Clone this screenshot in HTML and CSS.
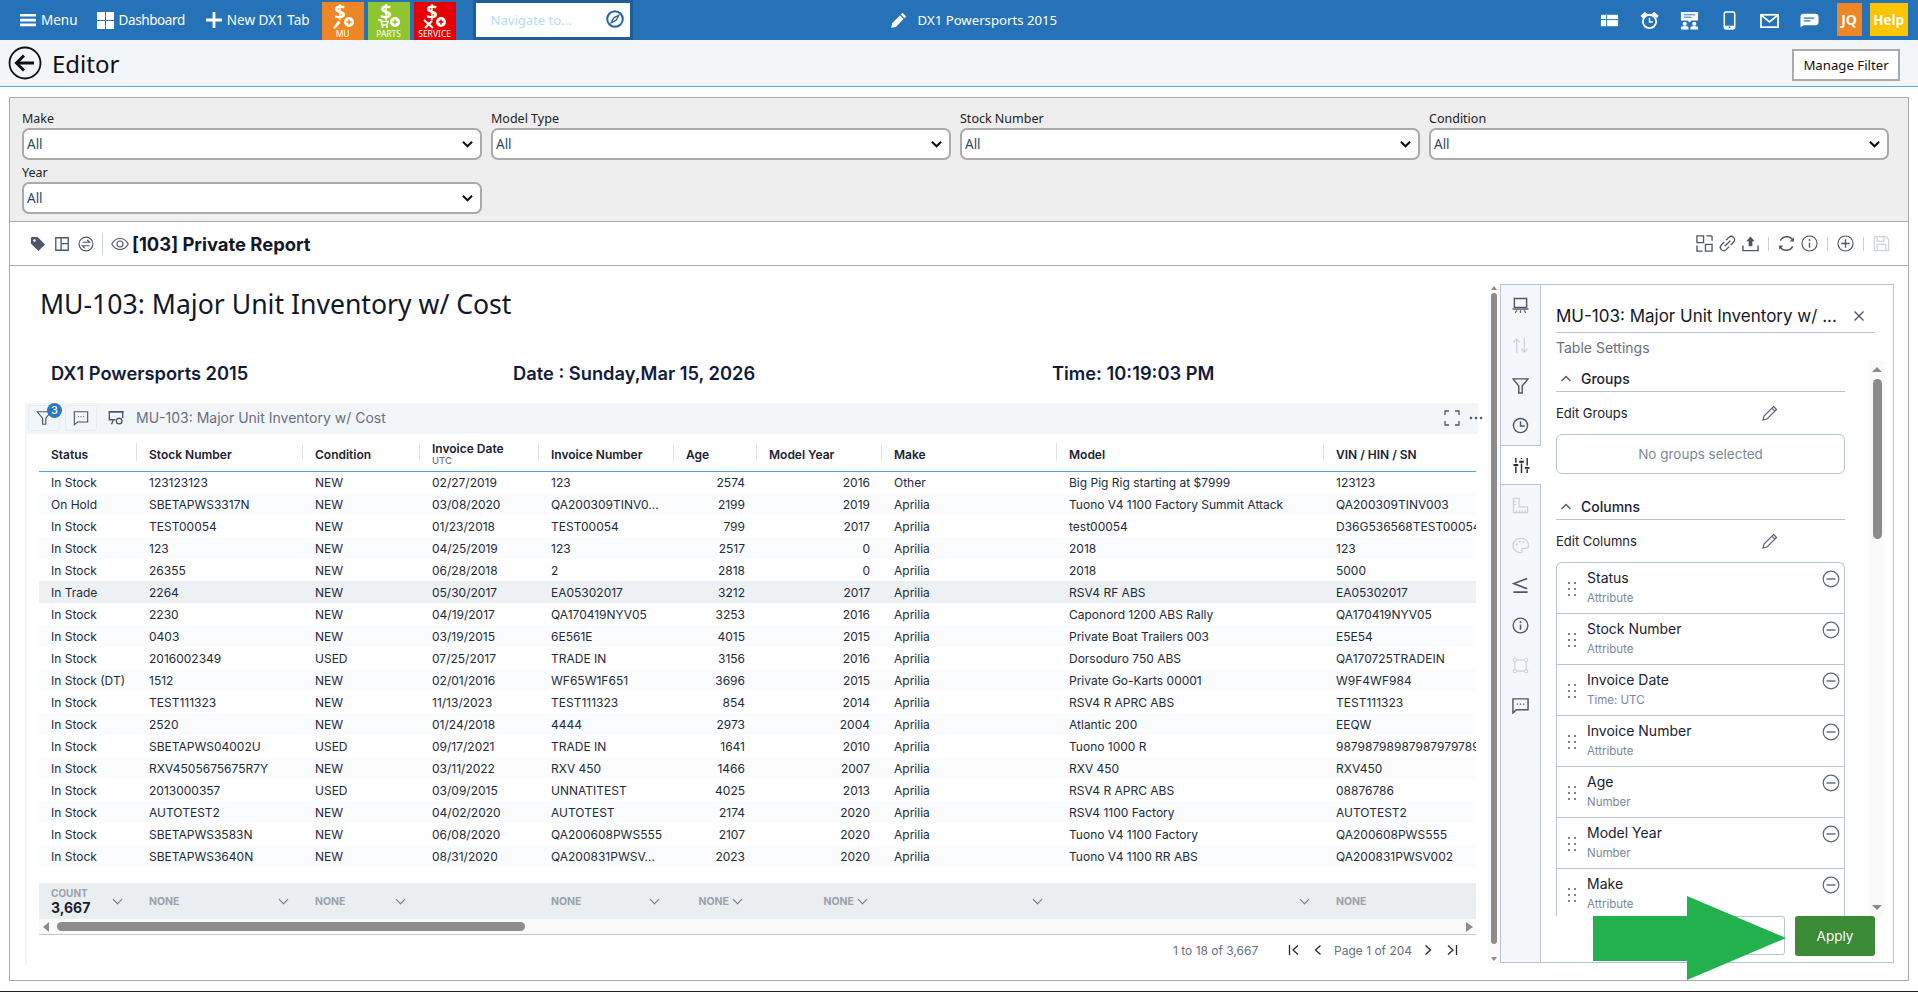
FILE: index.html
```html
<!DOCTYPE html>
<html lang="en">
<head>
<meta charset="utf-8">
<title>Editor</title>
<link rel="stylesheet" href="styles.css">
</head>
<body>
<header class="topbar">
  <a class="nav-item nav-menu"><svg class="nav-ic" viewBox="0 0 16 16"><path d="M0 2h16v2.600H0zM0 6.800h16v2.600H0zM0 11.600h16v2.600H0z" fill="#fff"/></svg>Menu</a>
  <a class="nav-item nav-dash"><svg class="nav-ic nav-ic-l" viewBox="0 0 17 17"><path d="M0 0h8v8H0zM9 0h8v8H9zM0 9h8v8H0zM9 9h8v8H9z" fill="#fff"/></svg>Dashboard</a>
  <a class="nav-item nav-new"><svg class="nav-ic" viewBox="0 0 16 16"><path d="M6.600 0h2.800v6.600H16v2.800H9.400V16H6.600V9.400H0V6.600h6.600z" fill="#fff"/></svg>New DX1 Tab</a>
  <div class="quick quick-mu"><svg class="quick-ic" viewBox="0 0 42 26"><text x="18" y="17" class="dollar">$</text><circle cx="27" cy="20" r="5" fill="#fff"/><path d="M24.500 20h5M27 17.500v5" stroke="#ee8626" stroke-width="1.500"/><path d="M11 26l5-7 2.500 1.500-5 6z" fill="#fff"/></svg><span>MU</span></div>
  <div class="quick quick-parts"><svg class="quick-ic" viewBox="0 0 42 26"><text x="18" y="17" class="dollar">$</text><circle cx="27" cy="20" r="5" fill="#fff"/><path d="M24.500 20h5M27 17.500v5" stroke="#8fc52e" stroke-width="1.500"/><path d="M10 18h3l1 5h5l1-3.500h-6" stroke="#fff" stroke-width="1.600" fill="none"/><circle cx="14.500" cy="25" r="1.100" fill="#fff"/><circle cx="19" cy="25" r="1.100" fill="#fff"/></svg><span>PARTS</span></div>
  <div class="quick quick-service"><svg class="quick-ic" viewBox="0 0 42 26"><text x="18" y="17" class="dollar">$</text><circle cx="27" cy="20" r="5" fill="#fff"/><path d="M24.500 20h5M27 17.500v5" stroke="#e60000" stroke-width="1.500"/><path d="M10 18l9 8M11 26l7-7" stroke="#fff" stroke-width="2.200"/></svg><span>SERVICE</span></div>
  <div class="navigate"><span>Navigate to...</span><svg class="compass" viewBox="0 0 18 18"><circle cx="9" cy="9" r="7.800" fill="none" stroke="#24649c" stroke-width="2"/><path d="M12.800 5.200 10.200 10.200 5.200 12.800 7.800 7.800z" fill="none" stroke="#24649c" stroke-width="1.300"/></svg></div>
  <div class="dealer"><svg class="dealer-ic" viewBox="0 0 16 16"><path d="M11.500.8l3.700 3.700-1.700 1.700-3.700-3.700zM8.900 3.400l3.700 3.700-7.800 7.800-4.600.900.900-4.600z" fill="#fff"/></svg>DX1 Powersports 2015</div>
  <div class="top-icons">
    <svg class="top-ic" viewBox="0 0 20 20"><path d="M1 4h18v12H1z" fill="#fff"/><path d="M1 9h18M7 4v12" stroke="#2672b8" stroke-width="1"/></svg>
    <svg class="top-ic" viewBox="0 0 20 20"><circle cx="10" cy="11" r="7" fill="none" stroke="#fff" stroke-width="2"/><path d="M10 7v4.500h3.500" fill="none" stroke="#fff" stroke-width="1.500"/><path d="M1 5l4-3.500 2 1.500-4.500 4zM19 5l-4-3.500-2 1.500 4.500 4zM5 18l1.500-2M15 18l-1.500-2" fill="#fff" stroke="#fff"/></svg>
    <svg class="top-ic" viewBox="0 0 20 20"><path d="M1 1h18v9H12l-2 2-2-2H1z" fill="#fff"/><path d="M4 4h12M4 6.500h8" stroke="#2672b8"/><circle cx="5" cy="13.500" r="2.200" fill="#fff"/><circle cx="15" cy="13.500" r="2.200" fill="#fff"/><path d="M1 19.500v-2c0-1 1-1.800 4-1.800s4 .8 4 1.800v2zM11 19.500v-2c0-1 1-1.800 4-1.800s4 .8 4 1.800v2z" fill="#fff"/></svg>
    <svg class="top-ic" viewBox="0 0 20 20"><rect x="4.500" y="1" width="11" height="18" rx="1.800" fill="none" stroke="#fff" stroke-width="1.600"/><path d="M5 15.500h10v3H5z" fill="#fff"/><circle cx="10" cy="17" r=".9" fill="#2672b8"/></svg>
    <svg class="top-ic" viewBox="0 0 20 20"><rect x="1" y="4" width="18" height="13" fill="none" stroke="#fff" stroke-width="1.800"/><path d="M1.500 4.500 10 11.500l8.500-7" fill="none" stroke="#fff" stroke-width="1.800"/></svg>
    <svg class="top-ic" viewBox="0 0 20 20"><path d="M4 3h12a3.500 3.500 0 0 1 3.500 3.500v5A3.500 3.500 0 0 1 16 15H4L.5 17V6.500A3.500 3.500 0 0 1 4 3z" fill="#fff"/><path d="M4 7.500h11M4 10.500h7" stroke="#2672b8" stroke-width="1.300"/></svg>
  </div>
  <div class="badge-jq">JQ</div>
  <div class="badge-help">Help</div>
</header>

<div class="subheader">
  <svg class="back" viewBox="0 0 34 34"><circle cx="17" cy="17" r="15.500" fill="none" stroke="#111" stroke-width="1.800"/><path d="M8 17h18" stroke="#111" stroke-width="3"/><path d="M16 9.500 8.500 17l7.500 7.500" fill="none" stroke="#111" stroke-width="3"/></svg>
  <h1 class="page-title">Editor</h1>
  <button class="manage">Manage Filter</button>
</div>

<main class="shell">
  <section class="filters">
    <div class="field"><label>Make</label><select><option>All</option></select></div>
    <div class="field"><label>Model Type</label><select><option>All</option></select></div>
    <div class="field"><label>Stock Number</label><select><option>All</option></select></div>
    <div class="field"><label>Condition</label><select><option>All</option></select></div>
    <div class="field"><label>Year</label><select><option>All</option></select></div>
  </section>

  <section class="toolbar">
    <svg class="tb-ic" viewBox="0 0 18 18"><path d="M1 2.500A1.500 1.500 0 0 1 2.500 1h6L17 9.500 9.500 17 1 8.500z" fill="#4d5768"/><circle cx="5" cy="5" r="1.400" fill="#fff"/></svg>
    <svg class="tb-ic" viewBox="0 0 18 18"><path d="M2 2h14v14H2zM8 2v14M8 8.500h8" fill="none" stroke="#4d5768" stroke-width="1.500"/></svg>
    <svg class="tb-ic" viewBox="0 0 18 18"><circle cx="9" cy="9" r="7.800" fill="none" stroke="#4d5768" stroke-width="1.300"/><path d="M5 7h8l-2.500-2.500M13 11H5l2.500 2.500" fill="none" stroke="#4d5768" stroke-width="1.300"/></svg>
    <span class="tb-sep"></span>
    <svg class="tb-eye" viewBox="0 0 18 18"><path d="M.8 9C3 5 5.800 3.500 9 3.500S15 5 17.200 9C15 13 12.200 14.500 9 14.500S3 13 .8 9z" fill="none" stroke="#4d5768" stroke-width="1.200"/><circle cx="9" cy="9" r="3" fill="none" stroke="#4d5768" stroke-width="1.200"/></svg>
    <strong class="report-name">[103] Private Report</strong>
    <div class="tb-right">
      <svg class="tb-ic2" viewBox="0 0 18 18"><path d="M1 1h7v7H1zM10 10h7v7h-7zM11 1h6M17 1v5M1 11v6h6" fill="none" stroke="#4d5768" stroke-width="1.400"/></svg>
      <svg class="tb-ic2" viewBox="0 0 18 18"><path d="M7.500 5.500 10.500 2.500a3.500 3.500 0 0 1 5 5l-3 3M10.500 12.500l-3 3a3.500 3.500 0 0 1-5-5l3-3M6 12l6-6" fill="none" stroke="#4d5768" stroke-width="1.400"/></svg>
      <svg class="tb-ic2" viewBox="0 0 18 18"><path d="M1 11v5.500h16V11M1 16.500" fill="none" stroke="#4d5768" stroke-width="1.500"/><path d="M9 1.500 13.500 6.500H11V12H7V6.500H4.500z" fill="#4d5768"/></svg>
      <span class="tb-sep2"></span>
      <svg class="tb-ic2" viewBox="0 0 18 18"><path d="M2.500 6A7.500 7.500 0 0 1 16 6M15.500 12A7.500 7.500 0 0 1 2 12" fill="none" stroke="#4d5768" stroke-width="1.500"/><path d="M16.800 2.500v4.300h-4.300zM1.200 15.500v-4.300h4.300z" fill="#4d5768"/></svg>
      <svg class="tb-ic2" viewBox="0 0 18 18"><circle cx="9" cy="9" r="8" fill="none" stroke="#4d5768" stroke-width="1.200"/><path d="M9 8v5.500" stroke="#4d5768" stroke-width="1.500"/><circle cx="9" cy="5.300" r="1" fill="#4d5768"/></svg>
      <span class="tb-sep2"></span>
      <svg class="tb-ic2" viewBox="0 0 18 18"><circle cx="9" cy="9" r="8" fill="none" stroke="#4d5768" stroke-width="1.200"/><path d="M9 4.500v9M4.500 9h9" stroke="#4d5768" stroke-width="1.500"/></svg>
      <span class="tb-sep2"></span>
      <svg class="tb-ic2" viewBox="0 0 18 18"><path d="M1.500 1.500h12l3 3v12h-15z" fill="none" stroke="#cfd6df" stroke-width="1.500"/><path d="M4.500 2v4.500h7V2M4.500 16v-6h9v6" fill="none" stroke="#cfd6df" stroke-width="1.500"/></svg>
    </div>
  </section>

  <section class="content">
    <div class="report">
      <h2 class="report-title">MU-103: Major Unit Inventory w/ Cost</h2>
      <div class="report-info"><span>DX1 Powersports 2015</span><span>Date : Sunday,Mar 15, 2026</span><span>Time: 10:19:03 PM</span></div>
      <div class="widget">
        <div class="widget-head">
          <span class="wbtn wbtn-filter"><svg class="w-ic" viewBox="0 0 18 18"><path d="M1.500 2h15L11 9.500V16H7.500V9.500z" fill="none" stroke="#4d5768" stroke-width="1.300"/></svg><span class="count">3</span></span>
          <span class="wbtn"><svg class="w-ic" viewBox="0 0 18 18"><path d="M1.500 2h15v11.500H5L1.500 16.500z" fill="none" stroke="#4d5768" stroke-width="1.300"/><path d="M5.500 7.500h1M8.500 7.500h1M11.500 7.500h1" stroke="#4d5768" stroke-width="1.500"/></svg></span>
          <svg class="w-pres" viewBox="0 0 18 18"><path d="M1.500 2h15v7M1.500 2v9h4M4 16l2-5h2" fill="none" stroke="#4d5768" stroke-width="1.500"/><circle cx="12.500" cy="12.500" r="3.200" fill="none" stroke="#4d5768" stroke-width="1.500"/><path d="M.5 2h17" stroke="#4d5768" stroke-width="1.500"/></svg>
          <span class="widget-title">MU-103: Major Unit Inventory w/ Cost</span>
          <svg class="w-full" viewBox="0 0 16 16"><path d="M1 5V1h4M11 1h4v4M15 11v4h-4M5 15H1v-4" fill="none" stroke="#4d5768" stroke-width="1.300"/></svg>
          <svg class="w-dots" viewBox="0 0 16 16"><circle cx="3" cy="8" r="1.300" fill="#4d5768"/><circle cx="8" cy="8" r="1.300" fill="#4d5768"/><circle cx="13" cy="8" r="1.300" fill="#4d5768"/></svg>
        </div>
        <div class="widget-body">
          <table class="grid">
            <colgroup><col class="c1"><col class="c2"><col class="c3"><col class="c4"><col class="c5"><col class="c6"><col class="c7"><col class="c8"><col class="c9"><col class="c10"></colgroup>
            <thead><tr><th>Status</th><th>Stock Number</th><th>Condition</th><th class="two"><span class="h2l">Invoice Date</span><small>UTC</small></th><th>Invoice Number</th><th>Age</th><th>Model Year</th><th>Make</th><th>Model</th><th>VIN / HIN / SN</th></tr></thead>
            <tbody>
              <tr><td>In Stock</td><td>123123123</td><td>NEW</td><td>02/27/2019</td><td>123</td><td class="n">2574</td><td class="n">2016</td><td>Other</td><td>Big Pig Rig starting at $7999</td><td>123123</td></tr>
              <tr><td>On Hold</td><td>SBETAPWS3317N</td><td>NEW</td><td>03/08/2020</td><td>QA200309TINV0...</td><td class="n">2199</td><td class="n">2019</td><td>Aprilia</td><td>Tuono V4 1100 Factory Summit Attack</td><td>QA200309TINV003</td></tr>
              <tr><td>In Stock</td><td>TEST00054</td><td>NEW</td><td>01/23/2018</td><td>TEST00054</td><td class="n">799</td><td class="n">2017</td><td>Aprilia</td><td>test00054</td><td>D36G536568TEST00054</td></tr>
              <tr><td>In Stock</td><td>123</td><td>NEW</td><td>04/25/2019</td><td>123</td><td class="n">2517</td><td class="n">0</td><td>Aprilia</td><td>2018</td><td>123</td></tr>
              <tr><td>In Stock</td><td>26355</td><td>NEW</td><td>06/28/2018</td><td>2</td><td class="n">2818</td><td class="n">0</td><td>Aprilia</td><td>2018</td><td>5000</td></tr>
              <tr class="hl"><td>In Trade</td><td>2264</td><td>NEW</td><td>05/30/2017</td><td>EA05302017</td><td class="n">3212</td><td class="n">2017</td><td>Aprilia</td><td>RSV4 RF ABS</td><td>EA05302017</td></tr>
              <tr><td>In Stock</td><td>2230</td><td>NEW</td><td>04/19/2017</td><td>QA170419NYV05</td><td class="n">3253</td><td class="n">2016</td><td>Aprilia</td><td>Caponord 1200 ABS Rally</td><td>QA170419NYV05</td></tr>
              <tr><td>In Stock</td><td>0403</td><td>NEW</td><td>03/19/2015</td><td>6E561E</td><td class="n">4015</td><td class="n">2015</td><td>Aprilia</td><td>Private Boat Trailers 003</td><td>E5E54</td></tr>
              <tr><td>In Stock</td><td>2016002349</td><td>USED</td><td>07/25/2017</td><td>TRADE IN</td><td class="n">3156</td><td class="n">2016</td><td>Aprilia</td><td>Dorsoduro 750 ABS</td><td>QA170725TRADEIN</td></tr>
              <tr><td>In Stock (DT)</td><td>1512</td><td>NEW</td><td>02/01/2016</td><td>WF65W1F651</td><td class="n">3696</td><td class="n">2015</td><td>Aprilia</td><td>Private Go-Karts 00001</td><td>W9F4WF984</td></tr>
              <tr><td>In Stock</td><td>TEST111323</td><td>NEW</td><td>11/13/2023</td><td>TEST111323</td><td class="n">854</td><td class="n">2014</td><td>Aprilia</td><td>RSV4 R APRC ABS</td><td>TEST111323</td></tr>
              <tr><td>In Stock</td><td>2520</td><td>NEW</td><td>01/24/2018</td><td>4444</td><td class="n">2973</td><td class="n">2004</td><td>Aprilia</td><td>Atlantic 200</td><td>EEQW</td></tr>
              <tr><td>In Stock</td><td>SBETAPWS04002U</td><td>USED</td><td>09/17/2021</td><td>TRADE IN</td><td class="n">1641</td><td class="n">2010</td><td>Aprilia</td><td>Tuono 1000 R</td><td>98798798987987979789890</td></tr>
              <tr><td>In Stock</td><td>RXV4505675675R7Y</td><td>NEW</td><td>03/11/2022</td><td>RXV 450</td><td class="n">1466</td><td class="n">2007</td><td>Aprilia</td><td>RXV 450</td><td>RXV450</td></tr>
              <tr><td>In Stock</td><td>2013000357</td><td>USED</td><td>03/09/2015</td><td>UNNATITEST</td><td class="n">4025</td><td class="n">2013</td><td>Aprilia</td><td>RSV4 R APRC ABS</td><td>08876786</td></tr>
              <tr><td>In Stock</td><td>AUTOTEST2</td><td>NEW</td><td>04/02/2020</td><td>AUTOTEST</td><td class="n">2174</td><td class="n">2020</td><td>Aprilia</td><td>RSV4 1100 Factory</td><td>AUTOTEST2</td></tr>
              <tr><td>In Stock</td><td>SBETAPWS3583N</td><td>NEW</td><td>06/08/2020</td><td>QA200608PWS555</td><td class="n">2107</td><td class="n">2020</td><td>Aprilia</td><td>Tuono V4 1100 Factory</td><td>QA200608PWS555</td></tr>
              <tr><td>In Stock</td><td>SBETAPWS3640N</td><td>NEW</td><td>08/31/2020</td><td>QA200831PWSV...</td><td class="n">2023</td><td class="n">2020</td><td>Aprilia</td><td>Tuono V4 1100 RR ABS</td><td>QA200831PWSV002</td></tr>
            </tbody>
          </table>
          <div class="summary">
            <div><span class="s-count"><small>COUNT</small><b>3,667</b></span><i class="chev"></i></div>
            <div><small>NONE</small><i class="chev"></i></div>
            <div><small>NONE</small><i class="chev"></i></div>
            <div class="s-end"></div>
            <div><small>NONE</small><i class="chev"></i></div>
            <div class="s-end"><small>NONE</small><i class="chev"></i></div>
            <div class="s-end"><small>NONE</small><i class="chev"></i></div>
            <div class="s-end"><i class="chev"></i></div>
            <div class="s-end"><i class="chev"></i></div>
            <div><small>NONE</small></div>
          </div>
          <div class="hscroll"><i class="arrow-l"></i><span class="hthumb"></span><i class="arrow-r"></i></div>
          <div class="pager">
            <span class="pager-count">1 to 18 of 3,667</span>
            <svg class="pg pg-first" viewBox="0 0 12 12"><path d="M1.500 1v10M10 1.500 5 6l5 4.500" fill="none" stroke="#222b3a" stroke-width="1.300"/></svg>
            <svg class="pg pg-prev" viewBox="0 0 12 12"><path d="M8.500 1.500 3.500 6l5 4.500" fill="none" stroke="#222b3a" stroke-width="1.300"/></svg>
            <span class="pager-page">Page 1 of 204</span>
            <svg class="pg pg-next" viewBox="0 0 12 12"><path d="M3.500 1.500 8.500 6l-5 4.500" fill="none" stroke="#222b3a" stroke-width="1.300"/></svg>
            <svg class="pg pg-last" viewBox="0 0 12 12"><path d="M10.500 1v10M2 1.500 7 6l-5 4.500" fill="none" stroke="#222b3a" stroke-width="1.300"/></svg>
          </div>
        </div>
      </div>
    </div>

    <div class="vscroll"><i class="arrow-u"></i><span class="vthumb"></span><i class="arrow-d"></i></div>

    <aside class="panel">
      <nav class="tabs">
        <span class="tab"><svg class="tab-ic" viewBox="0 0 18 18"><path d="M2.500 1.500h13v9.500h-13z" fill="none" stroke="#4d5768" stroke-width="1.500"/><path d="M.5 12h17v1.500H.5z" fill="#4d5768"/><path d="M5 14l-1.500 3M9 14v3M13 14l1.500 3" stroke="#4d5768" stroke-width="1.200"/></svg></span>
        <span class="tab"><svg class="tab-ic" viewBox="0 0 18 18"><path d="M5 17V2M1.500 5.500 5 2l3.500 3.500M13 1v15M9.500 12.500 13 16l3.500-3.500" fill="none" stroke="#ccd3dc" stroke-width="1.400"/></svg></span>
        <span class="tab"><svg class="tab-ic" viewBox="0 0 18 18"><path d="M1 2h16l-6.200 7.500V17H7.200V9.500z" fill="none" stroke="#4d5768" stroke-width="1.500"/></svg></span>
        <span class="tab"><svg class="tab-ic" viewBox="0 0 18 18"><circle cx="9" cy="9" r="7.500" fill="none" stroke="#4d5768" stroke-width="1.500"/><path d="M9 4.500V9.500h4.500" fill="none" stroke="#4d5768" stroke-width="1.500"/></svg></span>
        <span class="tab tab-active"><svg class="tab-ic" viewBox="0 0 18 18"><path d="M3 1v5M3 10v7M9 1v1M9 7v10M15 1v8M15 13v4" stroke="#222b3a" stroke-width="1.500"/><path d="M.5 7.500h5v2h-5zM6.500 4h5v2h-5zM12.500 10.500h5v2h-5z" fill="#222b3a"/></svg></span>
        <span class="tab"><svg class="tab-ic" viewBox="0 0 18 18"><path d="M1.500 1.500h6v9h9v6h-15zM1.500 5h2.500M1.500 8h2.500M5 16.500V14M8 16.500V14M11 16.500V14M14 16.500V14" fill="none" stroke="#ccd3dc" stroke-width="1.400"/></svg></span>
        <span class="tab"><svg class="tab-ic" viewBox="0 0 18 18"><path d="M9 1.500C4.500 1.500 1 4.800 1 9s3.500 7.500 8 7.500c1.500 0 2-1 1.500-2-.6-1.500.2-2.500 2-2.500h2.500c1.500 0 2.500-1.200 2.500-3 0-4.500-3.500-7.500-8-7.500z" fill="none" stroke="#ccd3dc" stroke-width="1.400"/><circle cx="5" cy="8" r="1.200" fill="#ccd3dc"/><circle cx="8" cy="5" r="1.200" fill="#ccd3dc"/><circle cx="12" cy="5.500" r="1.200" fill="#ccd3dc"/></svg></span>
        <span class="tab"><svg class="tab-ic" viewBox="0 0 18 18"><path d="M16 1.500 2 7l14 5.500M1.500 16h15" fill="none" stroke="#4d5768" stroke-width="1.700"/></svg></span>
        <span class="tab"><svg class="tab-ic" viewBox="0 0 18 18"><circle cx="9" cy="9" r="7.800" fill="none" stroke="#4d5768" stroke-width="1.400"/><path d="M9 8v5.500" stroke="#4d5768" stroke-width="1.600"/><circle cx="9" cy="5.300" r="1.100" fill="#4d5768"/></svg></span>
        <span class="tab"><svg class="tab-ic" viewBox="0 0 18 18"><path d="M3 3h12v12H3z" fill="none" stroke="#ccd3dc" stroke-width="1.300"/><g fill="#fff" stroke="#ccd3dc" stroke-width="1.200"><circle cx="3" cy="3" r="1.700"/><circle cx="15" cy="3" r="1.700"/><circle cx="3" cy="15" r="1.700"/><circle cx="15" cy="15" r="1.700"/></g></svg></span>
        <span class="tab"><svg class="tab-ic" viewBox="0 0 18 18"><path d="M1 2h16v11.500H4.500L1 17z" fill="none" stroke="#4d5768" stroke-width="1.500"/><path d="M5 7.500h1.500M8.300 7.500h1.500M11.600 7.500h1.500" stroke="#4d5768" stroke-width="1.500"/></svg></span>
      </nav>
      <div class="settings">
        <div class="settings-title"><span>MU-103: Major Unit Inventory w/ ...</span><svg class="close" viewBox="0 0 12 12"><path d="M1.500 1.500l9 9M10.500 1.500l-9 9" stroke="#4d5768" stroke-width="1.400"/></svg></div>
        <div class="settings-sub">Table Settings</div>
        <div class="scroller">
          <div class="scroll-body">
            <div class="sec-head"><svg class="sec-chev" viewBox="0 0 12 12"><path d="M1.500 8 6 3.500 10.500 8" fill="none" stroke="#4d5768" stroke-width="1.300"/></svg>Groups</div>
            <div class="edit-row"><span>Edit Groups</span><svg class="pencil" viewBox="0 0 16 16"><path d="M11.500 1.500l3 3L5 14l-4 1 1-4zM9.800 3.200l3 3" fill="none" stroke="#5c6676" stroke-width="1.200"/></svg></div>
            <div class="empty-box">No groups selected</div>
            <div class="sec-head sec-cols"><svg class="sec-chev" viewBox="0 0 12 12"><path d="M1.500 8 6 3.500 10.500 8" fill="none" stroke="#4d5768" stroke-width="1.300"/></svg>Columns</div>
            <div class="edit-row"><span>Edit Columns</span><svg class="pencil" viewBox="0 0 16 16"><path d="M11.500 1.500l3 3L5 14l-4 1 1-4zM9.800 3.200l3 3" fill="none" stroke="#5c6676" stroke-width="1.200"/></svg></div>
            <ul class="col-list">
              <li class="col-item"><svg class="drag" viewBox="0 0 10 16"><g fill="#5c6676"><circle cx="2" cy="2" r="1.100"/><circle cx="8" cy="2" r="1.100"/><circle cx="2" cy="8" r="1.100"/><circle cx="8" cy="8" r="1.100"/><circle cx="2" cy="14" r="1.100"/><circle cx="8" cy="14" r="1.100"/></g></svg><div class="col-text"><b>Status</b><small>Attribute</small></div><svg class="minus" viewBox="0 0 18 18"><circle cx="9" cy="9" r="7.800" fill="none" stroke="#5c6676" stroke-width="1.200"/><path d="M4.500 9h9" stroke="#5c6676" stroke-width="1.400"/></svg></li>
              <li class="col-item"><svg class="drag" viewBox="0 0 10 16"><g fill="#5c6676"><circle cx="2" cy="2" r="1.100"/><circle cx="8" cy="2" r="1.100"/><circle cx="2" cy="8" r="1.100"/><circle cx="8" cy="8" r="1.100"/><circle cx="2" cy="14" r="1.100"/><circle cx="8" cy="14" r="1.100"/></g></svg><div class="col-text"><b>Stock Number</b><small>Attribute</small></div><svg class="minus" viewBox="0 0 18 18"><circle cx="9" cy="9" r="7.800" fill="none" stroke="#5c6676" stroke-width="1.200"/><path d="M4.500 9h9" stroke="#5c6676" stroke-width="1.400"/></svg></li>
              <li class="col-item"><svg class="drag" viewBox="0 0 10 16"><g fill="#5c6676"><circle cx="2" cy="2" r="1.100"/><circle cx="8" cy="2" r="1.100"/><circle cx="2" cy="8" r="1.100"/><circle cx="8" cy="8" r="1.100"/><circle cx="2" cy="14" r="1.100"/><circle cx="8" cy="14" r="1.100"/></g></svg><div class="col-text"><b>Invoice Date</b><small>Time: UTC</small></div><svg class="minus" viewBox="0 0 18 18"><circle cx="9" cy="9" r="7.800" fill="none" stroke="#5c6676" stroke-width="1.200"/><path d="M4.500 9h9" stroke="#5c6676" stroke-width="1.400"/></svg></li>
              <li class="col-item"><svg class="drag" viewBox="0 0 10 16"><g fill="#5c6676"><circle cx="2" cy="2" r="1.100"/><circle cx="8" cy="2" r="1.100"/><circle cx="2" cy="8" r="1.100"/><circle cx="8" cy="8" r="1.100"/><circle cx="2" cy="14" r="1.100"/><circle cx="8" cy="14" r="1.100"/></g></svg><div class="col-text"><b>Invoice Number</b><small>Attribute</small></div><svg class="minus" viewBox="0 0 18 18"><circle cx="9" cy="9" r="7.800" fill="none" stroke="#5c6676" stroke-width="1.200"/><path d="M4.500 9h9" stroke="#5c6676" stroke-width="1.400"/></svg></li>
              <li class="col-item"><svg class="drag" viewBox="0 0 10 16"><g fill="#5c6676"><circle cx="2" cy="2" r="1.100"/><circle cx="8" cy="2" r="1.100"/><circle cx="2" cy="8" r="1.100"/><circle cx="8" cy="8" r="1.100"/><circle cx="2" cy="14" r="1.100"/><circle cx="8" cy="14" r="1.100"/></g></svg><div class="col-text"><b>Age</b><small>Number</small></div><svg class="minus" viewBox="0 0 18 18"><circle cx="9" cy="9" r="7.800" fill="none" stroke="#5c6676" stroke-width="1.200"/><path d="M4.500 9h9" stroke="#5c6676" stroke-width="1.400"/></svg></li>
              <li class="col-item"><svg class="drag" viewBox="0 0 10 16"><g fill="#5c6676"><circle cx="2" cy="2" r="1.100"/><circle cx="8" cy="2" r="1.100"/><circle cx="2" cy="8" r="1.100"/><circle cx="8" cy="8" r="1.100"/><circle cx="2" cy="14" r="1.100"/><circle cx="8" cy="14" r="1.100"/></g></svg><div class="col-text"><b>Model Year</b><small>Number</small></div><svg class="minus" viewBox="0 0 18 18"><circle cx="9" cy="9" r="7.800" fill="none" stroke="#5c6676" stroke-width="1.200"/><path d="M4.500 9h9" stroke="#5c6676" stroke-width="1.400"/></svg></li>
              <li class="col-item"><svg class="drag" viewBox="0 0 10 16"><g fill="#5c6676"><circle cx="2" cy="2" r="1.100"/><circle cx="8" cy="2" r="1.100"/><circle cx="2" cy="8" r="1.100"/><circle cx="8" cy="8" r="1.100"/><circle cx="2" cy="14" r="1.100"/><circle cx="8" cy="14" r="1.100"/></g></svg><div class="col-text"><b>Make</b><small>Attribute</small></div><svg class="minus" viewBox="0 0 18 18"><circle cx="9" cy="9" r="7.800" fill="none" stroke="#5c6676" stroke-width="1.200"/><path d="M4.500 9h9" stroke="#5c6676" stroke-width="1.400"/></svg></li>
            </ul>
          </div>
          <div class="pscroll"><i class="arrow-u2"></i><span class="pthumb"></span><i class="arrow-d2"></i></div>
        </div>
        <div class="settings-foot"><button class="btn-cancel">Cancel</button><button class="btn-apply">Apply</button></div>
      </div>
    </aside>
  </section>
</main>
<div class="page-end"></div>

<svg class="callout" viewBox="0 0 193 84"><path d="M0 20H94V0L193 42 94 84V65H0z" fill="#22b14c"/></svg>
</body>
</html>
```

FILE: styles.css
```css
* { box-sizing: border-box; }
html, body { margin: 0; padding: 0; }
body { width: 1918px; height: 992px; overflow: hidden; background: #fff; font-family: "Inter", "Liberation Sans", sans-serif; color: #161e2e; position: relative; }

/* top bar */
.topbar { height: 40px; background: #2672b8; display: flex; align-items: center; color: #fff; font-family: "Noto Sans", sans-serif; font-size: 13.5px; }
.nav-item { display: flex; align-items: center; white-space: nowrap; }
.nav-menu { margin-left: 20px; }
.nav-dash { margin-left: 19px; letter-spacing: -.4px; }
.nav-new { margin-left: 21px; }
.nav-ic { width: 16px; height: 16px; margin-right: 5px; }
.nav-ic-l { width: 17px; height: 17px; }
.quick { width: 42px; height: 38px; margin-top: 2px; display: flex; flex-direction: column; align-items: center; font-size: 8.500px; line-height: 12px; }
.quick-mu { background: #ee8626; margin-left: 12px; }
.quick-parts { background: #8fc52e; margin-left: 4px; }
.quick-service { background: #e60000; margin-left: 4px; }
.quick-ic { width: 42px; height: 26px; overflow: visible; }
.dollar { font-family: "Noto Sans", sans-serif; font-size: 20px; font-weight: 700; fill: #fff; text-anchor: middle; }
.navigate { width: 160px; height: 40px; margin-left: 17px; border: 3px solid #1f5f97; background: #fff; display: flex; align-items: center; justify-content: space-between; padding: 0 6px 0 15px; color: #b5dcfb; font-size: 13px; }
.compass { width: 18px; height: 18px; margin-bottom: 2px; }
.dealer { margin-left: 258px; display: flex; align-items: center; font-size: 13.200px; white-space: nowrap; width: 260px; }
.dealer-ic { width: 16px; height: 16px; margin-right: 11px; }
.top-icons { margin-left: 449px; display: flex; align-items: center; gap: 21px; }
.top-ic { width: 19px; height: 19px; }
.badge-jq { margin-left: 18px; width: 25px; height: 33px; align-self: flex-start; margin-top: 3px; background: #ee8626; font-weight: 700; font-size: 14px; display: flex; align-items: center; justify-content: center; font-family: "Open Sans", sans-serif; }
.badge-help { margin-left: 8px; width: 38px; height: 33px; align-self: flex-start; margin-top: 3px; background: #fdc400; font-weight: 700; font-size: 13.500px; display: flex; align-items: center; justify-content: center; font-family: "Open Sans", sans-serif; }

/* sub header */
.subheader { height: 47px; background: #f3f6f9; border-bottom: 1px solid #5baae6; display: flex; align-items: center; font-family: "Noto Sans", sans-serif; }
.back { width: 34px; height: 34px; margin-left: 8px; }
.page-title { margin: 0 0 0 10px; font-weight: 400; font-size: 24px; color: #111; flex: 1; }
.manage { width: 108px; height: 32px; margin-right: 18px; margin-top: 4px; border: 2px solid #aaa; background: #fff; font-family: "Noto Sans", sans-serif; font-size: 13.200px; color: #111; padding: 0; }

/* shell */
.shell { margin: 10px 0 0 9px; width: 1900px; height: 884px; border: 1px solid #aaa; }
.filters { height: 124px; background: #eee; border-bottom: 1px solid #aaa; padding: 11px 0 0 12px; display: grid; grid-template-columns: repeat(4, 460px); column-gap: 9px; row-gap: 3px; grid-auto-rows: 51px; font-family: "Noto Sans", sans-serif; }
.field { display: flex; flex-direction: column; }
.field label { font-size: 12.500px; height: 19px; line-height: 20px; color: #222; }
.field select { appearance: none; -webkit-appearance: none; height: 32px; border: 2px solid #aaa; border-radius: 7px; background: #fff url("data:image/svg+xml,%3Csvg xmlns='http://www.w3.org/2000/svg' viewBox='0 0 12 8'%3E%3Cpath d='M1 1.500 6 6.500l5-5' fill='none' stroke='%23111' stroke-width='2.200'/%3E%3C/svg%3E") no-repeat right 7px center / 11px 8px; font-family: "Noto Sans", sans-serif; font-size: 13.500px; color: #2b4a6b; padding: 0 0 0 3px; }

.toolbar { height: 44px; border-bottom: 1px solid #aaa; display: flex; align-items: center; padding-left: 20px; }
.tb-ic { width: 16px; height: 16px; margin-right: 8px; }
.tb-sep { width: 1px; height: 22px; background: #c6d2df; margin: 0 8px 0 0; }
.tb-eye { width: 18px; height: 18px; margin-right: 3px; }
.report-name { font-size: 18.400px; font-weight: 700; color: #111827; white-space: nowrap; }
.tb-right { margin-left: auto; margin-right: 18px; display: flex; align-items: center; gap: 6px; }
.tb-ic2 { width: 17px; height: 17px; }
.tb-sep2 { width: 1px; height: 14px; background: #c6d2df; margin: 0 3px; }

/* content */
.content { display: flex; height: 714px; }
.report { width: 1478px; }
.report-title { margin: 19px 0 0 30px; height: 38px; font-family: "Noto Sans", sans-serif; font-weight: 400; font-size: 26.600px; line-height: 38px; color: #111827; white-space: nowrap; }
.report-info { margin-top: 38px; height: 24px; padding-left: 41px; display: grid; grid-template-columns: 462px 539px 1fr; font-size: 18.300px; font-weight: 600; line-height: 24px; color: #111c3a; }
.widget { margin: 18px 0 0 15px; width: 1453px; height: 562px; background: #f3f6f9; padding-left: 2px; display: flex; flex-direction: column; }
.widget-head { height: 31px; display: flex; align-items: center; padding: 0 0 2px 1px; color: #68707f; flex: none; }
.wbtn { width: 32px; height: 26px; border: 1px solid #e6ebf0; border-radius: 3px; display: flex; align-items: center; justify-content: center; margin-right: 5px; position: relative; }
.w-ic { width: 16px; height: 16px; }
.count { position: absolute; right: -3px; top: -3px; width: 15px; height: 15px; border-radius: 50%; background: #2a78c8; color: #fff; font-size: 11px; font-weight: 500; text-align: center; line-height: 15px; }
.w-pres { width: 16px; height: 16px; margin: 0 12px 0 6px; }
.widget-title { font-size: 14px; flex: 1; }
.w-full { width: 16px; height: 16px; margin-right: 8px; }
.w-dots { width: 16px; height: 16px; margin-right: -6px; }
.widget-body { flex: 1; background: #fff; padding: 0 2px 0 12px; overflow: hidden; }

.grid { width: 1437px; table-layout: fixed; border-collapse: collapse; font-size: 12px; }
.c1 { width: 98px; } .c2 { width: 166px; } .c3 { width: 117px; } .c4 { width: 119px; } .c5 { width: 135px; }
.c6 { width: 83px; } .c7 { width: 125px; } .c8 { width: 175px; } .c9 { width: 267px; } .c10 { width: 152px; }
.grid th { height: 37px; padding: 6px 0 0 12px; text-align: left; font-weight: 600; color: #1a2233; border-bottom: 1px solid #4ea5de; line-height: 14px; background: linear-gradient(#dfe3e8, #dfe3e8) right center / 1px 18px no-repeat; }
.grid th.two { padding-top: 3px; }
.grid th:last-child { background: none; }
.h2l { display: block; }
.grid th small { display: block; font-size: 9.500px; font-weight: 500; color: #6b7280; line-height: 10px; }
.grid td { height: 22px; padding: 0 12px; white-space: nowrap; overflow: hidden; color: #222b3a; }
.grid td:last-child { padding-right: 0; }
.grid td.n { text-align: right; }
.grid tbody tr:nth-child(even) { background: #fbfcfe; }
.grid tbody tr.hl { background: #eef1f3; }

.summary { margin-top: 16px; height: 36px; width: 1437px; background: #ebeef1; display: grid; grid-template-columns: 98px 166px 117px 119px 135px 83px 125px 175px 267px 152px; align-items: center; font-size: 11px; }
.summary > div { display: flex; align-items: center; justify-content: space-between; padding: 0 16px 0 12px; height: 100%; color: #6d7684; }
.summary > div.s-end { justify-content: flex-end; gap: 5px; padding: 0 16px 0 0; }
.summary small { font-size: 10.500px; font-weight: 700; color: #9aa1ab; }
.s-count { display: flex; flex-direction: column; }
.s-count b { font-size: 14px; line-height: 15px; font-weight: 700; color: #161e2e; }
.s-count small { line-height: 13px; font-size: 10px; }
.chev { display: block; width: 7px; height: 7px; border-right: 1px solid #6d7684; border-bottom: 1px solid #6d7684; transform: rotate(45deg); margin-top: -4px; flex: none; }

.hscroll { height: 16px; width: 1437px; background: #fafafa; border-bottom: 1px solid #c4c7cb; display: flex; align-items: center; padding: 0 3px 0 2px; }
.arrow-l { width: 0; height: 0; border: 5px solid transparent; border-right: 6px solid #8c8c8c; border-left: 0; margin-left: 2px; }
.arrow-r { width: 0; height: 0; border: 5px solid transparent; border-left: 7px solid #8c8c8c; border-right: 0; margin-left: auto; }
.hthumb { width: 468px; height: 9px; border-radius: 5px; background: #8c8c8c; margin-left: 8px; }
.pager { height: 30px; width: 1437px; display: flex; align-items: center; font-size: 12px; color: #68707f; }
.pager-count { margin-left: 1134px; width: 85px; white-space: nowrap; }
.pg { width: 12px; height: 12px; flex: none; }
.pg-first { margin-left: 30px; }
.pg-prev { margin-left: 12px; }
.pager-page { margin-left: 10px; width: 78px; white-space: nowrap; }
.pg-next { margin-left: 10px; }
.pg-last { margin-left: 12px; }

.vscroll { width: 12px; margin-top: 18px; height: 681px; background: #fafafa; display: flex; flex-direction: column; align-items: center; }
.arrow-u { width: 0; height: 0; border: 3px solid transparent; border-bottom: 4px solid #8c8c8c; border-top: 0; margin-top: 2px; }
.arrow-d { width: 0; height: 0; border: 3px solid transparent; border-top: 4px solid #8c8c8c; border-bottom: 0; margin-top: 13px; }
.vthumb { width: 6px; height: 651px; border-radius: 3px; background: #8c8c8c; margin-top: 3px; }

.panel { width: 394px; margin-top: 18px; height: 679px; border: 1px solid #b6c4d8; display: flex; }
.tabs { width: 40px; background: #f5f7fa; border-right: 1px solid #b6c4d8; display: flex; flex-direction: column; flex: none; }
.tab { height: 40px; display: flex; align-items: center; justify-content: center; flex: none; }
.tab-active { background: #fff; border-top: 1px solid #b6c4d8; border-bottom: 1px solid #b6c4d8; margin-right: -1px; }
.tab-ic { width: 17px; height: 17px; }
.settings { flex: 1; padding-left: 15px; display: flex; flex-direction: column; min-width: 0; }
.settings-title { height: 48px; width: 319px; border-bottom: 1px solid #b6c4d8; flex: none; display: flex; align-items: flex-end; justify-content: space-between; padding: 0 10px 3px 0; font-size: 17px; line-height: 26px; color: #111827; white-space: nowrap; }
.close { width: 12px; height: 12px; margin-bottom: 7px; }
.settings-sub { height: 28px; flex: none; font-size: 14px; color: #68707f; line-height: 29px; }
.scroller { height: 555px; flex: none; display: flex; overflow: hidden; width: 329px; }
.scroll-body { width: 289px; flex: none; }
.pscroll { margin-left: 24px; width: 16px; background: #fafafa; display: flex; flex-direction: column; align-items: center; }
.arrow-u2 { width: 0; height: 0; border: 5px solid transparent; border-bottom: 5px solid #8c8c8c; border-top: 0; margin-top: 6px; }
.arrow-d2 { width: 0; height: 0; border: 5px solid transparent; border-top: 5px solid #8c8c8c; border-bottom: 0; margin-top: 366px; }
.pthumb { width: 9px; height: 160px; border-radius: 5px; background: #8c8c8c; margin-top: 7px; }
.sec-head { height: 31px; border-bottom: 1px solid #b6c4d8; display: flex; align-items: flex-end; padding: 0 0 3px 4px; font-size: 14px; line-height: 18px; font-weight: 500; color: #1a2233; }
.sec-chev { width: 12px; height: 12px; margin: 0 9px 3px 0; }
.sec-cols { height: 30px; margin-top: 16px; }
.edit-row { height: 42px; display: flex; align-items: center; justify-content: space-between; padding-right: 67px; font-size: 13px; color: #161e2e; }
.pencil { width: 16px; height: 16px; }
.empty-box { height: 40px; border: 1px solid #b6c4d8; border-radius: 6px; display: flex; align-items: center; justify-content: center; font-size: 13.500px; color: #7d8899; }
.col-list { list-style: none; margin: 0; padding: 0; border: 1px solid #b6c4d8; border-bottom: 0; border-radius: 6px 6px 0 0; }
.col-item { height: 51px; border-bottom: 1px solid #b6c4d8; display: flex; align-items: center; padding: 0 4px 0 10px; }
.drag { width: 10px; height: 16px; flex: none; margin-top: 2px; }
.col-text { margin: 2px 0 0 10px; flex: 1; display: flex; flex-direction: column; }
.col-text b { font-weight: 400; font-size: 14px; line-height: 18px; color: #1a2233; }
.col-text small { font-size: 11.500px; line-height: 22px; color: #7d8899; }
.minus { width: 18px; height: 18px; margin-top: -18px; }
.settings-foot { height: 40px; flex: none; width: 319px; display: flex; justify-content: flex-end; gap: 10px; }
.btn-cancel { width: 85px; height: 39px; border: 1px solid #b6c4d8; background: #fff; border-radius: 3px; font-family: "Inter", sans-serif; font-size: 13px; }
.btn-apply { width: 80px; height: 40px; border: 0; background: #3a8a36; color: #fff; border-radius: 3px; font-family: "Inter", sans-serif; font-size: 13.500px; }

.page-end { margin-top: 10px; height: 1px; background: #222; }
.callout { position: absolute; left: 1593px; top: 896px; width: 193px; height: 84px; }
```
